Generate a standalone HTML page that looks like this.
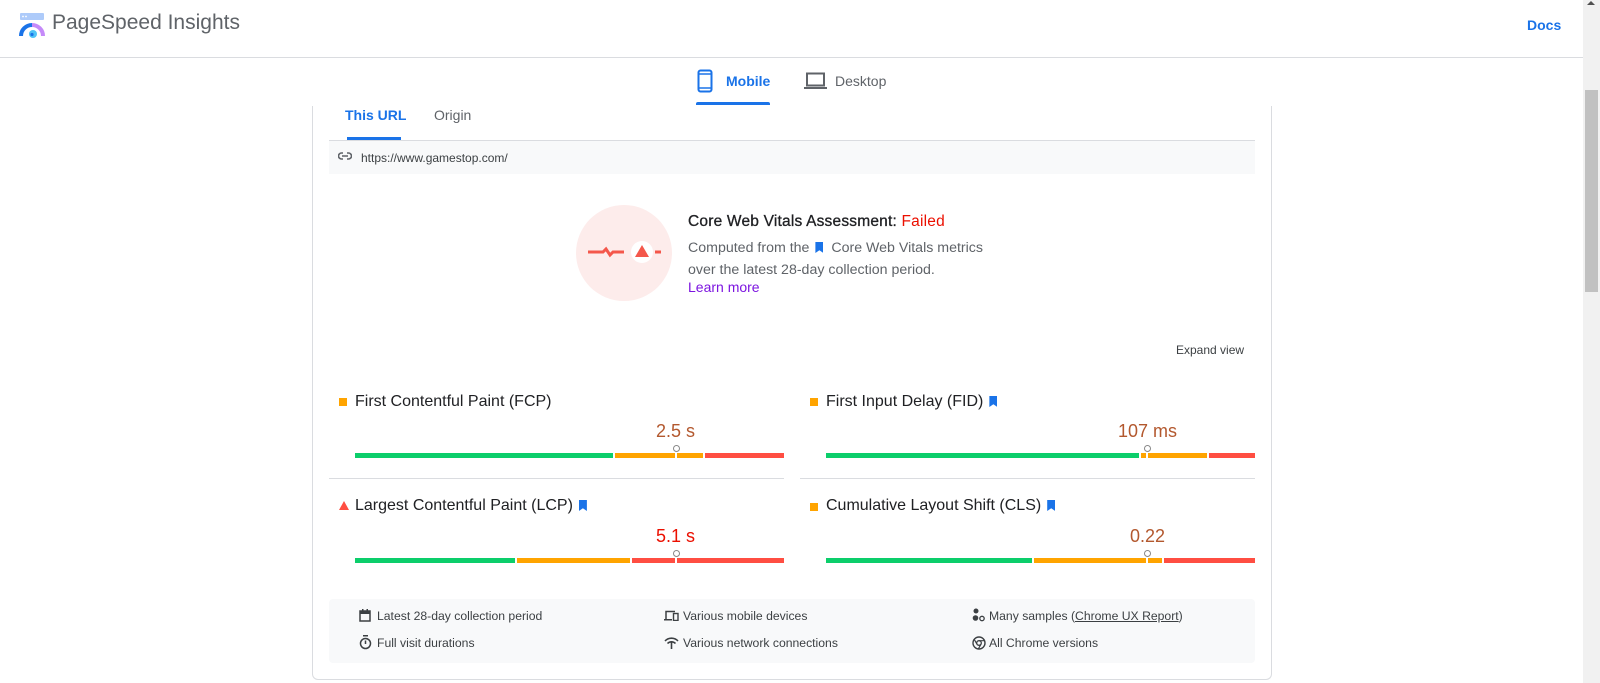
<!DOCTYPE html>
<html><head><meta charset="utf-8"><style>
*{margin:0;padding:0;box-sizing:border-box}
body{width:1600px;height:683px;overflow:hidden;background:#fff;font-family:"Liberation Sans",Arial,sans-serif;position:relative;color:#202124}
.a{position:absolute;white-space:nowrap}
.bar{position:absolute;height:5px}
.g{background:#0cce6b}.o{background:#ffa400}.r{background:#ff4e42}
.mk{position:absolute;width:2px;height:8px;background:#fff}
.mc{position:absolute;width:7px;height:7px;border:1.5px solid #888;border-radius:50%;background:#fff}
.mt{font-size:16px;color:#202124}
.sq{position:absolute;width:8px;height:8px;background:#ffa400}
.bm{display:inline-block;width:8px;height:11px;background:#1a73e8;clip-path:polygon(0 0,100% 0,100% 100%,50% 75%,0 100%);vertical-align:-1px;margin-left:6px}
.ft{font-size:12.2px;color:#3c4043}
</style></head><body>
<!-- header -->
<svg class="a" style="left:19px;top:12px" width="26" height="26" viewBox="0 0 26 26">
<rect x="1" y="1" width="24" height="7" rx="1" fill="#aecbfa"/>
<circle cx="4" cy="4.5" r="0.9" fill="#fff"/><circle cx="7" cy="4.5" r="0.9" fill="#fff"/>
<path d="M2 24 A11 11 0 0 1 13 13" stroke="#1a73e8" stroke-width="4" fill="none"/>
<path d="M13 13 A11 11 0 0 1 24 24" stroke="#c58af9" stroke-width="4" fill="none"/>
<circle cx="14" cy="22" r="4" fill="#4fc3f7"/><circle cx="13" cy="22.5" r="1.6" fill="#1a73e8"/>
</svg>
<div class="a" style="left:52px;top:11px;font-size:21px;color:#5f6368">PageSpeed Insights</div>
<div class="a" style="left:1527px;top:17px;font-size:14px;color:#1a73e8;font-weight:bold">Docs</div>
<div class="a" style="left:0;top:57px;width:1583px;height:1px;background:#dadce0"></div>
<!-- scrollbar -->
<div class="a" style="left:1583px;top:0;width:17px;height:683px;background:#f1f1f1"></div>
<div class="a" style="left:1585px;top:90px;width:13px;height:202px;background:#c1c1c1"></div>
<div class="a" style="left:1587px;top:1px;width:0;height:0;border-left:4px solid transparent;border-right:4px solid transparent;border-bottom:4px solid #505050"></div>
<!-- device tabs -->
<svg class="a" style="left:697px;top:69px" width="16" height="24" viewBox="0 0 16 24"><rect x="1.5" y="1.5" width="13" height="21" rx="2" fill="none" stroke="#1a73e8" stroke-width="2"/><line x1="2" y1="5" x2="14" y2="5" stroke="#1a73e8" stroke-width="1.5"/><line x1="2" y1="19" x2="14" y2="19" stroke="#1a73e8" stroke-width="1.5"/></svg>
<div class="a" style="left:726px;top:73px;font-size:14px;font-weight:bold;color:#1a73e8">Mobile</div>
<div class="a" style="left:696px;top:102px;width:74px;height:3px;background:#1a73e8;border-radius:2px 2px 0 0"></div>
<svg class="a" style="left:804px;top:72px" width="23" height="18" viewBox="0 0 23 18"><rect x="3" y="1.5" width="17" height="12" fill="none" stroke="#5f6368" stroke-width="2"/><rect x="0" y="15" width="23" height="2" fill="#5f6368"/></svg>
<div class="a" style="left:835px;top:73px;font-size:14px;color:#5f6368">Desktop</div>
<!-- card -->
<div class="a" style="left:312px;top:106px;width:960px;height:574px;border:1px solid #dadce0;border-top:none;border-radius:0 0 6px 6px"></div>
<div class="a" style="left:345px;top:107px;font-size:14px;color:#1a73e8;font-weight:bold">This URL</div>
<div class="a" style="left:347px;top:137px;width:54px;height:3px;background:#1a73e8"></div>
<div class="a" style="left:434px;top:107px;font-size:14px;color:#5f6368">Origin</div>
<div class="a" style="left:329px;top:140px;width:926px;height:34px;background:#f8f9fa;border-top:1px solid #dadce0"></div>
<svg class="a" style="left:338px;top:152px" width="14" height="8" viewBox="0 0 14 8"><path d="M5 1H3.5a3 3 0 0 0 0 6H5M9 1h1.5a3 3 0 0 1 0 6H9M4 4h6" stroke="#5f6368" stroke-width="1.6" fill="none"/></svg>
<div class="a" style="left:361px;top:151px;font-size:12px;color:#3c4043">https://www.gamestop.com/</div>
<!-- assessment -->
<div class="a" style="left:576px;top:205px;width:96px;height:96px;border-radius:50%;background:#fdeceb"></div>
<svg class="a" style="left:586px;top:238px" width="76" height="28" viewBox="0 0 76 28">
<path d="M2 14H17L20 11L24 17L27 14H38" stroke="#f4574b" stroke-width="3" fill="none"/>
<circle cx="56" cy="14" r="11" fill="#fff"/>
<path d="M49 19L56 7L63 19Z" fill="#f4574b"/>
<rect x="69" y="12.5" width="6" height="3" fill="#f4574b"/>
</svg>
<div class="a" style="left:688px;top:213px;font-size:15.5px;color:#202124;letter-spacing:0.2px;-webkit-text-stroke:0.3px #202124">Core Web Vitals Assessment: <span style="color:#eb0f00;-webkit-text-stroke:0">Failed</span></div>
<div class="a" style="left:688px;top:237px;font-size:14.2px;color:#5f6368;line-height:22px">Computed from the <span class="bm" style="margin:0 4px 0 2px"></span> Core Web Vitals metrics<br>over the latest 28-day collection period.</div>
<div class="a" style="left:688px;top:279px;font-size:14px;color:#7c14e0">Learn more</div>
<div class="a" style="left:1176px;top:343px;font-size:12px;color:#3c4043">Expand view</div>
<!-- FCP -->
<div class="sq" style="left:339px;top:398px"></div>
<div class="a mt" style="left:355px;top:393px">First Contentful Paint (FCP)</div>
<div class="a" style="left:656px;top:421px;font-size:18px;color:#b3582e">2.5 s</div>
<div class="bar g" style="left:355px;top:453px;width:258px"></div>
<div class="bar o" style="left:615px;top:453px;width:88px"></div>
<div class="bar r" style="left:705px;top:453px;width:79px"></div>
<div class="mk" style="left:675px;top:450px"></div><div class="mc" style="left:673px;top:445px"></div>
<div class="a" style="left:329px;top:478px;width:455px;height:1px;background:#dadce0"></div>
<!-- LCP -->
<div class="a" style="left:339px;top:501px;width:0;height:0;border-left:5px solid transparent;border-right:5px solid transparent;border-bottom:9px solid #ff4e42"></div>
<div class="a mt" style="left:355px;top:497px">Largest Contentful Paint (LCP)<span class="bm"></span></div>
<div class="a" style="left:656px;top:526px;font-size:18px;color:#eb0f00">5.1 s</div>
<div class="bar g" style="left:355px;top:558px;width:160px"></div>
<div class="bar o" style="left:517px;top:558px;width:113px"></div>
<div class="bar r" style="left:632px;top:558px;width:152px"></div>
<div class="mk" style="left:675px;top:555px"></div><div class="mc" style="left:673px;top:550px"></div>
<!-- FID -->
<div class="sq" style="left:810px;top:398px"></div>
<div class="a mt" style="left:826px;top:393px">First Input Delay (FID)<span class="bm"></span></div>
<div class="a" style="left:1118px;top:421px;font-size:18px;color:#b3582e">107 ms</div>
<div class="bar g" style="left:826px;top:453px;width:313px"></div>
<div class="bar o" style="left:1141px;top:453px;width:66px"></div>
<div class="bar r" style="left:1209px;top:453px;width:46px"></div>
<div class="mk" style="left:1146px;top:450px"></div><div class="mc" style="left:1144px;top:445px"></div>
<div class="a" style="left:800px;top:478px;width:455px;height:1px;background:#dadce0"></div>
<!-- CLS -->
<div class="sq" style="left:810px;top:503px"></div>
<div class="a mt" style="left:826px;top:497px">Cumulative Layout Shift (CLS)<span class="bm"></span></div>
<div class="a" style="left:1130px;top:526px;font-size:18px;color:#b3582e">0.22</div>
<div class="bar g" style="left:826px;top:558px;width:206px"></div>
<div class="bar o" style="left:1034px;top:558px;width:128px"></div>
<div class="bar r" style="left:1164px;top:558px;width:91px"></div>
<div class="mk" style="left:1146px;top:555px"></div><div class="mc" style="left:1144px;top:550px"></div>
<!-- footer -->
<div class="a" style="left:329px;top:599px;width:926px;height:64px;background:#f8f9fa;border-radius:4px"></div>
<svg class="a" style="left:359px;top:609px" width="12" height="13" viewBox="0 0 12 13"><rect x="1" y="2" width="10" height="10" fill="none" stroke="#3c4043" stroke-width="1.5"/><rect x="1" y="2" width="10" height="3" fill="#3c4043"/><rect x="3" y="0" width="1.5" height="3" fill="#3c4043"/><rect x="7.5" y="0" width="1.5" height="3" fill="#3c4043"/></svg>
<div class="a ft" style="left:377px;top:609px">Latest 28-day collection period</div>
<svg class="a" style="left:664px;top:610px" width="15" height="11" viewBox="0 0 15 11"><path d="M2 9V1.5h9" stroke="#3c4043" stroke-width="1.5" fill="none"/><rect x="0" y="9" width="8" height="1.5" fill="#3c4043"/><rect x="9.5" y="3.5" width="4.5" height="7" fill="none" stroke="#3c4043" stroke-width="1.4"/></svg>
<div class="a ft" style="left:683px;top:609px">Various mobile devices</div>
<svg class="a" style="left:972px;top:608px" width="13" height="14" viewBox="0 0 13 14"><circle cx="4" cy="3" r="2.5" fill="#3c4043"/><circle cx="3.5" cy="10" r="2.8" fill="#3c4043"/><circle cx="10" cy="10.5" r="2.2" fill="none" stroke="#3c4043" stroke-width="1.3"/></svg>
<div class="a ft" style="left:989px;top:609px">Many samples (<span style="text-decoration:underline">Chrome UX Report</span>)</div>
<svg class="a" style="left:359px;top:635px" width="13" height="15" viewBox="0 0 13 15"><rect x="4" y="0" width="5" height="1.5" fill="#3c4043"/><circle cx="6.5" cy="8.5" r="5" fill="none" stroke="#3c4043" stroke-width="1.5"/><path d="M6.5 5.5V9" stroke="#3c4043" stroke-width="1.5"/></svg>
<div class="a ft" style="left:377px;top:636px">Full visit durations</div>
<svg class="a" style="left:664px;top:637px" width="15" height="12" viewBox="0 0 15 12"><path d="M1 4a9 9 0 0 1 13 0M3.5 6.5a5.5 5.5 0 0 1 8 0" stroke="#3c4043" stroke-width="1.6" fill="none"/><path d="M7.5 5v7" stroke="#3c4043" stroke-width="1.6"/></svg>
<div class="a ft" style="left:683px;top:636px">Various network connections</div>
<svg class="a" style="left:972px;top:636px" width="14" height="14" viewBox="0 0 14 14"><circle cx="7" cy="7" r="6" fill="none" stroke="#3c4043" stroke-width="1.4"/><circle cx="7" cy="7" r="2.3" fill="none" stroke="#3c4043" stroke-width="1.3"/><path d="M7 4.7h5.5M5 8.2L2.3 3.5M9 8.2L6.3 13" stroke="#3c4043" stroke-width="1.2"/></svg>
<div class="a ft" style="left:989px;top:636px">All Chrome versions</div>
</body></html>
